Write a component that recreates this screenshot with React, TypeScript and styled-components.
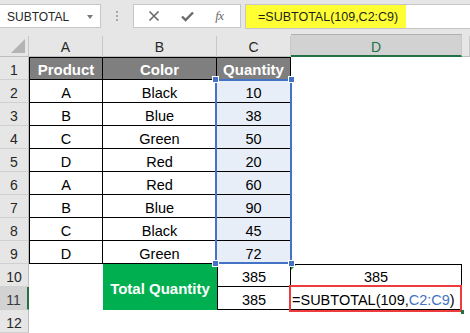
import React from 'react';
import styled, { createGlobalStyle } from 'styled-components';

const GlobalStyle = createGlobalStyle`
	html, body {
		margin: 0;
		padding: 0;
		background: #ffffff;
		overflow: hidden;
	}
	body {
		font-family: 'Liberation Sans', Arial, sans-serif;
		width: 470px;
		height: 333px;
	}
`;

const Screen = styled.div`
	width: 470px;
	height: 333px;
	overflow: hidden;
	display: flex;
	flex-direction: column;
`;

const Toolbar = styled.div`
	display: flex;
	align-items: flex-start;
	height: 40px;
	padding-top: 4px;
	box-sizing: border-box;
	background: #e6e6e6;
`;

const NameBox = styled.div`
	box-sizing: border-box;
	width: 101px;
	height: 24px;
	background: #ffffff;
	border: 1px solid #c6c6c6;
	border-left: none;
	display: flex;
	align-items: center;
	justify-content: space-between;
	padding: 1px 7px 0 7px;
	font-size: 12px;
	color: #262626;
`;

const DropArrow = styled.span`
	width: 0;
	height: 0;
	border-left: 3.5px solid transparent;
	border-right: 3.5px solid transparent;
	border-top: 4px solid #7a7a7a;
`;

const Grip = styled.div`
	width: 32px;
	height: 24px;
	display: flex;
	flex-direction: column;
	align-items: center;
	justify-content: center;
	gap: 2px;
	& span {
		width: 2px;
		height: 2px;
		background: #a6a6a6;
	}
`;

const FxBox = styled.div`
	box-sizing: border-box;
	width: 108px;
	height: 24px;
	background: #ffffff;
	border: 1px solid #c6c6c6;
	display: flex;
	align-items: center;
	justify-content: space-around;
	padding: 0 6px 0 4px;
	color: #666666;
`;

const FxText = styled.span`
	font-family: 'Liberation Serif', 'Times New Roman', serif;
	font-style: italic;
	font-size: 13px;
	color: #6a6a6a;
	letter-spacing: -0.5px;
`;

const FormulaInput = styled.div`
	flex: 1;
	margin-left: 4px;
	box-sizing: border-box;
	height: 25px;
	background: #ffffff;
	border: 1px solid #c6c6c6;
	border-right: none;
	display: flex;
	align-items: stretch;
`;

const Highlight = styled.div`
	width: 160px;
	background: #ffff33;
	display: flex;
	align-items: center;
	padding: 1px 0 0 12px;
	box-sizing: border-box;
	font-size: 12.5px;
	color: #1f1f1f;
`;

const Sheet = styled.div`
	display: grid;
	grid-template-columns: 29px 74px 114px 74px 171px 1fr;
	grid-template-rows: 21px repeat(12, 23px);
	background: #ffffff;
	font-size: 14px;
	color: #000000;
`;

const Corner = styled.div`
	grid-row: 1;
	grid-column: 1;
	background: #e6e6e6;
	border-right: 1px solid #c8c8c8;
	border-bottom: 1px solid #bdbdbd;
	box-sizing: border-box;
	position: relative;
	&::after {
		content: '';
		position: absolute;
		right: 3px;
		bottom: 3px;
		width: 0;
		height: 0;
		border-left: 14px solid transparent;
		border-bottom: 14px solid #b4b4b4;
	}
`;

const ColHead = styled.div<{ $col: number; $active?: boolean }>`
	grid-row: 1;
	grid-column: ${(p) => p.$col};
	box-sizing: border-box;
	background: ${(p) => (p.$active ? '#d2d2d2' : '#e6e6e6')};
	border-right: 1px solid #c8c8c8;
	border-top: ${(p) => (p.$active ? '1px solid #b0b0b0' : 'none')};
	border-bottom: ${(p) => (p.$active ? '2px solid #217346' : '1px solid #bdbdbd')};
	margin-top: ${(p) => (p.$active ? '-2px' : '0')};
	display: flex;
	align-items: center;
	justify-content: center;
	padding-top: ${(p) => (p.$active ? '3px' : '2px')};
	color: ${(p) => (p.$active ? '#217346' : '#262626')};
	font-size: 14px;
`;

const RowHead = styled.div<{ $row: number; $active?: boolean }>`
	grid-row: ${(p) => p.$row + 1};
	grid-column: 1;
	box-sizing: border-box;
	background: ${(p) => (p.$active ? '#d2d2d2' : '#e6e6e6')};
	border-bottom: 1px solid #d0d0d0;
	border-right: ${(p) => (p.$active ? '2px solid #217346' : '1px solid #bdbdbd')};
	display: flex;
	align-items: center;
	justify-content: center;
	padding-top: 3px;
	color: ${(p) => (p.$active ? '#3b3b3b' : '#262626')};
	font-size: 14px;
`;

const Cell = styled.div<{
	$row: number;
	$col: number;
	$fill?: string;
	$bold?: boolean;
	$left?: boolean;
	$top?: boolean;
	$align?: 'center' | 'flex-start';
}>`
	grid-row: ${(p) => p.$row + 1};
	grid-column: ${(p) => p.$col};
	box-sizing: border-box;
	position: relative;
	background: ${(p) => p.$fill || '#ffffff'};
	border-right: 1px solid #000000;
	border-bottom: 1px solid #000000;
	border-left: ${(p) => (p.$left ? '1px solid #000000' : 'none')};
	border-top: ${(p) => (p.$top ? '1px solid #000000' : 'none')};
	display: flex;
	align-items: center;
	justify-content: ${(p) => p.$align || 'center'};
	padding-top: ${(p) => (p.$bold ? '1px' : '3px')};
	padding-left: ${(p) => (p.$align === 'flex-start' ? '1px' : '0')};
	color: ${(p) => (p.$bold ? '#ffffff' : '#000000')};
	font-weight: ${(p) => (p.$bold ? 700 : 400)};
	font-size: ${(p) => (p.$bold ? '15px' : '14.5px')};
	white-space: nowrap;
`;

const TotalLabel = styled.div`
	grid-row: 11 / span 2;
	grid-column: 3;
	background: #00b050;
	color: #ffffff;
	font-weight: 700;
	font-size: 15px;
	display: flex;
	align-items: center;
	justify-content: center;
	padding-top: 2px;
`;

const ErrorMark = styled.span`
	position: absolute;
	left: 0;
	top: 0;
	width: 0;
	height: 0;
	border-right: 5px solid transparent;
	border-top: 5px solid #1e8a3e;
`;

const RangeRef = styled.span`
	color: #4472c4;
`;

const Selection = styled.div`
	grid-row: 3 / span 8;
	grid-column: 4;
	margin: -1px -1px 0 -2px;
	border: 2px solid #4472c4;
	position: relative;
	pointer-events: none;
	z-index: 2;
`;

const Handle = styled.span<{ $x: 'left' | 'right'; $y: 'top' | 'bottom' }>`
	position: absolute;
	${(p) => p.$x}: -5px;
	${(p) => p.$y}: -5px;
	width: 5px;
	height: 5px;
	background: #4472c4;
	border: 1px solid #ffffff;
`;

const FormulaFrame = styled.div`
	grid-row: 12;
	grid-column: 5;
	margin: -2px 0 -2px -2px;
	border: 2px solid #ee3b3b;
	position: relative;
	pointer-events: none;
	z-index: 3;
`;

const FillDot = styled.span`
	position: absolute;
	right: -4px;
	bottom: -4px;
	width: 3px;
	height: 4px;
	background: #217346;
`;

const data: [string, string, number][] = [
	['A', 'Black', 10],
	['B', 'Blue', 38],
	['C', 'Green', 50],
	['D', 'Red', 20],
	['A', 'Red', 60],
	['B', 'Blue', 90],
	['C', 'Black', 45],
	['D', 'Green', 72],
];

const XIcon = () => (
	<svg width="12" height="12" viewBox="0 0 12 12">
		<path d="M1.5 1.5 L10.5 10.5 M10.5 1.5 L1.5 10.5" stroke="#6a6a6a" strokeWidth="1.6" fill="none" />
	</svg>
);

const CheckIcon = () => (
	<svg width="13" height="11" viewBox="0 0 13 11">
		<path d="M1 5.5 L4.6 9 L12 1.5" stroke="#6a6a6a" strokeWidth="2.4" fill="none" />
	</svg>
);

const App = () => {
	const rowNums = Array.from({ length: 12 }, (_, i) => i + 1);

	return (
		<Screen>
			<GlobalStyle />
			<Toolbar>
				<NameBox>
					SUBTOTAL
					<DropArrow />
				</NameBox>
				<Grip>
					<span />
					<span />
					<span />
				</Grip>
				<FxBox>
					<XIcon />
					<CheckIcon />
					<FxText>fx</FxText>
				</FxBox>
				<FormulaInput>
					<Highlight>=SUBTOTAL(109,C2:C9)</Highlight>
				</FormulaInput>
			</Toolbar>
			<Sheet>
				<Corner />
				<ColHead $col={2}>A</ColHead>
				<ColHead $col={3}>B</ColHead>
				<ColHead $col={4}>C</ColHead>
				<ColHead $col={5} $active>
					D
				</ColHead>
				<ColHead $col={6} />
				{rowNums.map((n) => (
					<RowHead key={n} $row={n} $active={n === 11}>
						{n}
					</RowHead>
				))}

				<Cell $row={1} $col={2} $fill="#7f7f7f" $bold $left $top>
					Product
				</Cell>
				<Cell $row={1} $col={3} $fill="#7f7f7f" $bold $top>
					Color
				</Cell>
				<Cell $row={1} $col={4} $fill="#7f7f7f" $bold $top>
					Quantity
				</Cell>

				{data.map(([product, color, qty], i) => (
					<React.Fragment key={i}>
						<Cell $row={i + 2} $col={2} $left>
							{product}
						</Cell>
						<Cell $row={i + 2} $col={3}>
							{color}
						</Cell>
						<Cell $row={i + 2} $col={4} $fill="#e8eef8">
							{qty}
						</Cell>
					</React.Fragment>
				))}

				<TotalLabel>Total Quantity</TotalLabel>
				<Cell $row={10} $col={4} $left>
					385
				</Cell>
				<Cell $row={11} $col={4} $left>
					385
				</Cell>
				<Cell $row={10} $col={5} $top>
					<ErrorMark />
					385
				</Cell>
				<Cell $row={11} $col={5} $align="flex-start">
					=SUBTOTAL(109,<RangeRef>C2:C9</RangeRef>)
				</Cell>

				<Selection>
					<Handle $x="left" $y="top" />
					<Handle $x="right" $y="top" />
					<Handle $x="left" $y="bottom" />
					<Handle $x="right" $y="bottom" />
				</Selection>
				<FormulaFrame>
					<FillDot />
				</FormulaFrame>
			</Sheet>
		</Screen>
	);
};

export default App;
